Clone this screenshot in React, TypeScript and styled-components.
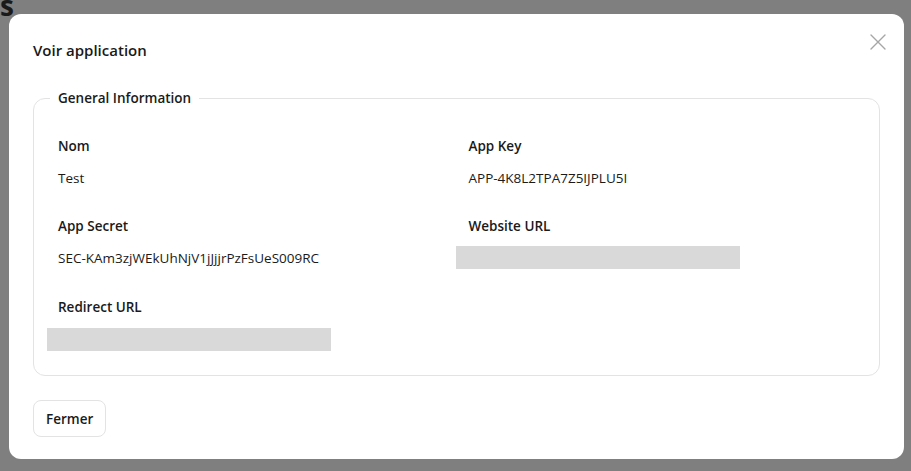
import React from "react";
import styled, { createGlobalStyle } from "styled-components";

const Global = createGlobalStyle`
  html, body { margin: 0; padding: 0; }
  body { font-family: "Open Sans", "Noto Sans", sans-serif; color: #1a1a1a; }
`;

const Backdrop = styled.div`
  width: 911px; height: 471px; background: #7f7f7f; position: relative; overflow: hidden;
  padding: 14px 7px 0 9px; box-sizing: border-box;
`;
const Peek = styled.div`
  position: absolute; left: 0; top: -14px; font: 700 28px "Open Sans", sans-serif; color: #1a1a1a;
`;
const Modal = styled.div`
  position: relative; background: #fff; border-radius: 12px; height: 445px; box-sizing: border-box;
  padding: 26px 24px 23px 24px; display: flex; flex-direction: column;
`;
const Title = styled.h2`
  margin: 0 0 28px; font-size: 15px; font-weight: 600; line-height: 20px;
`;
const Close = styled.button`
  position: absolute; right: 18px; top: 20px; border: 0; background: none; padding: 0; cursor: pointer;
`;
const Fieldset = styled.fieldset`
  margin: 0; border: 1px solid #e3e3e3; border-radius: 12px; padding: 28px 24px 24px 24px;
  min-width: 0;
`;
const Legend = styled.legend`
  font-size: 13.5px; font-weight: 600; padding: 0 8px; margin-left: -8px; line-height: 20px;
`;
const Grid = styled.div`
  display: grid; grid-template-columns: 1fr 1fr; column-gap: 24px; row-gap: 28px;
`;
const Field = styled.div`
  display: flex; flex-direction: column; gap: 12px;
`;
const Label = styled.div`font-size: 13.5px; font-weight: 600; line-height: 20px;`;
const Value = styled.div`font-size: 13.5px; line-height: 20px;`;
const Bar = styled.div<{ $off: number; $top: number }>`
  width: 284px; height: 23px; background: #d9d9d9; margin-left: ${p => p.$off}px; margin-top: ${p => p.$top}px;
`;
const Footer = styled.div`margin-top: 24px;`;
const Button = styled.button`
  font: 600 13.5px "Open Sans", sans-serif; color: #1a1a1a; background: #fff; border: 1px solid #e3e3e3;
  border-radius: 8px; height: 37px; padding: 0 12px;
`;

export default function App() {
  return (
    <>
      <Global />
      <Backdrop>
        <Peek>s</Peek>
        <Modal>
          <Title>Voir application</Title>
          <Close aria-label="close">
            <svg width="16" height="16" viewBox="0 0 16 16" stroke="#a6a6a6" strokeWidth="1.4" strokeLinecap="round">
              <path d="M1 1L15 15M15 1L1 15" />
            </svg>
          </Close>
          <Fieldset>
            <Legend>General Information</Legend>
            <Grid>
              <Field><Label>Nom</Label><Value>Test</Value></Field>
              <Field><Label>App Key</Label><Value>APP-4K8L2TPA7Z5IJPLU5I</Value></Field>
              <Field><Label>App Secret</Label><Value>SEC-KAm3zjWEkUhNjV1jJjjrPzFsUeS009RC</Value></Field>
              <Field><Label>Website URL</Label><Bar $off={-13} $top={-2} /></Field>
              <Field><Label>Redirect URL</Label><Bar $off={-11} $top={-1} /></Field>
            </Grid>
          </Fieldset>
          <Footer><Button>Fermer</Button></Footer>
        </Modal>
      </Backdrop>
    </>
  );
}
